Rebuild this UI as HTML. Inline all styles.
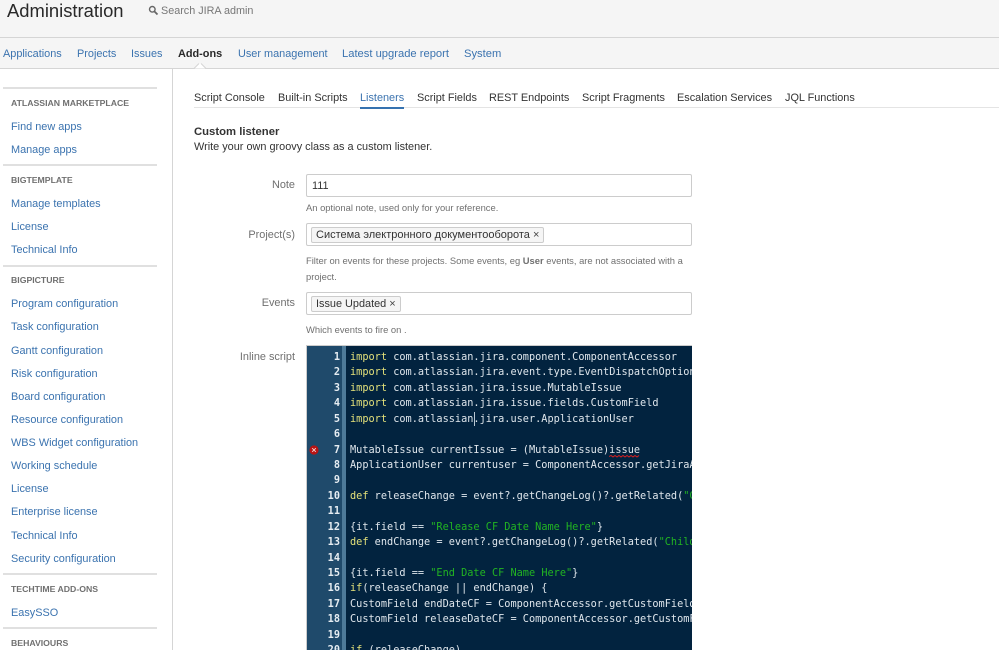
<!DOCTYPE html>
<html><head><meta charset="utf-8">
<style>
html,body{margin:0;padding:0;background:#fff}
body{width:999px;height:650px;position:relative;overflow:hidden;font-family:"Liberation Sans","Noto Sans CJK SC",sans-serif;font-size:11px;color:#333}
.t{position:absolute;white-space:nowrap;line-height:14px}
.h{position:absolute;background:#e0e0e0;height:2px;left:3px;width:154px}
.s{position:absolute;white-space:nowrap;left:11px;font-size:8.7px;line-height:12px;font-weight:bold;color:#707070}
.a{position:absolute;white-space:nowrap;left:11px;line-height:14px;color:#3b73af;font-size:10.9px}
.tab{position:absolute;top:91px;white-space:nowrap;line-height:14px;font-size:10.9px;color:#333}
.nav{position:absolute;top:47px;white-space:nowrap;line-height:14px;font-size:10.9px;color:#3b73af}
.lab{position:absolute;right:704px;white-space:nowrap;line-height:14px;font-size:10.9px;color:#707070}
.inp{position:absolute;left:306px;width:384px;height:21px;border:1px solid #ccc;border-radius:2px;background:#fff}
.help{position:absolute;left:306px;white-space:nowrap;font-size:9.4px;line-height:14px;color:#707070}
.tag{position:absolute;top:3px;left:4px;height:14px;line-height:14px;border:1px solid #ccc;border-radius:2px;background:#f5f5f5;padding:0 4px;font-size:10.9px;color:#333;white-space:nowrap}
#code{position:absolute;left:307px;top:346px;width:385px;height:304px;background:#02233f;overflow:hidden;font-family:"DejaVu Sans Mono","Liberation Mono",monospace;font-size:10.25px;color:#dfe6ec}
#gut{position:absolute;left:0;top:0;width:35px;height:304px;background:#1f4a6b;border-right:4px solid #4d7a99;box-sizing:content-box}
.n{position:absolute;left:0;width:33px;text-align:right;line-height:15px;color:#e6edf2;font-weight:bold}
.c{position:absolute;left:43px;line-height:15px;white-space:pre}
.k{color:#e3e07a}
.g{color:#22b422}
</style></head><body>
<div style="position:absolute;left:0;top:0;width:999px;height:37px;background:#f5f5f5"></div>
<div style="position:absolute;left:0;top:37px;width:999px;height:30px;background:#f5f5f5;border-top:1px solid #d5d5d5;border-bottom:1px solid #d5d5d5"></div>
<svg style="position:absolute;left:192px;top:62px" width="16" height="8"><path d="M2 6.5 L8 1 L14 6.5 Z" fill="#fff"/><path d="M1 6.5 L2 6.5 L7 1.5 M9 1.5 L14 6.5 L15 6.5" fill="none" stroke="#d5d5d5"/></svg>
<div class="t" style="left:7px;top:-1px;font-size:18.4px;line-height:24px;color:#292929">Administration</div>
<svg style="position:absolute;left:148px;top:5px" width="11" height="11" viewBox="0 0 11 11"><circle cx="4.3" cy="4.3" r="2.8" fill="none" stroke="#666" stroke-width="1.4"/><path d="M6.5 6.5L9.5 9.5" stroke="#666" stroke-width="1.8"/></svg>
<div class="t" style="left:161px;top:4px;font-size:10.8px;color:#777">Search JIRA admin</div>

<div class="nav" style="left:3px">Applications</div>
<div class="nav" style="left:77px">Projects</div>
<div class="nav" style="left:131px">Issues</div>
<div class="nav" style="left:178px;color:#292929;font-weight:bold">Add-ons</div>
<div class="nav" style="left:238px">User management</div>
<div class="nav" style="left:342px;font-size:11.2px">Latest upgrade report</div>
<div class="nav" style="left:464px;font-size:11.2px">System</div>

<div style="position:absolute;left:172px;top:68px;width:1px;height:582px;background:#d5d5d5"></div>

<div class="h" style="top:87px"></div>
<div class="s" style="top:97px">ATLASSIAN MARKETPLACE</div>
<div class="a" style="top:120px">Find new apps</div>
<div class="a" style="top:143px">Manage apps</div>
<div class="h" style="top:164px"></div>
<div class="s" style="top:174px">BIGTEMPLATE</div>
<div class="a" style="top:197px">Manage templates</div>
<div class="a" style="top:220px">License</div>
<div class="a" style="top:243px">Technical Info</div>
<div class="h" style="top:265px"></div>
<div class="s" style="top:274px">BIGPICTURE</div>
<div class="a" style="top:297px">Program configuration</div>
<div class="a" style="top:320px">Task configuration</div>
<div class="a" style="top:344px">Gantt configuration</div>
<div class="a" style="top:367px">Risk configuration</div>
<div class="a" style="top:390px">Board configuration</div>
<div class="a" style="top:413px">Resource configuration</div>
<div class="a" style="top:436px">WBS Widget configuration</div>
<div class="a" style="top:459px">Working schedule</div>
<div class="a" style="top:482px">License</div>
<div class="a" style="top:505px">Enterprise license</div>
<div class="a" style="top:529px">Technical Info</div>
<div class="a" style="top:552px">Security configuration</div>
<div class="h" style="top:573px"></div>
<div class="s" style="top:583px">TECHTIME ADD-ONS</div>
<div class="a" style="top:606px">EasySSO</div>
<div class="h" style="top:627px"></div>
<div class="s" style="top:637px">BEHAVIOURS</div>

<div style="position:absolute;left:194px;top:107px;width:805px;height:1px;background:#e4e4e4"></div>
<div class="tab" style="left:194px">Script Console</div>
<div class="tab" style="left:278px">Built-in Scripts</div>
<div class="tab" style="left:360px;color:#3b73af">Listeners</div>
<div style="position:absolute;left:360px;top:107px;width:44px;height:2px;background:#3572b0"></div>
<div class="tab" style="left:417px">Script Fields</div>
<div class="tab" style="left:489px">REST Endpoints</div>
<div class="tab" style="left:582px">Script Fragments</div>
<div class="tab" style="left:677px">Escalation Services</div>
<div class="tab" style="left:785px">JQL Functions</div>

<div class="t" style="left:194px;top:125px;font-size:11.3px;font-weight:bold;color:#333">Custom listener</div>
<div class="t" style="left:194px;top:140px;font-size:10.9px;color:#333">Write your own groovy class as a custom listener.</div>

<div class="lab" style="top:178px">Note</div>
<div class="inp" style="top:174px"><span style="position:absolute;left:5px;top:4px;line-height:14px;font-size:10.9px;color:#333">111</span></div>
<div class="help" style="top:201px">An optional note, used only for your reference.</div>

<div class="lab" style="top:228px">Project(s)</div>
<div class="inp" style="top:223px"><span class="tag" style="font-size:11px">Система электронного документооборота <span style="font-size:11px;color:#444">×</span></span></div>
<div class="help" style="top:254px">Filter on events for these projects. Some events, eg <b>User</b> events, are not associated with a</div>
<div class="help" style="top:270px">project.</div>

<div class="lab" style="top:296px">Events</div>
<div class="inp" style="top:292px"><span class="tag">Issue Updated <span style="font-size:11px;color:#444">×</span></span></div>
<div class="help" style="top:323px">Which events to fire on .</div>

<div class="lab" style="top:350px">Inline script</div>

<div style="position:absolute;left:306px;top:345px;width:386px;height:305px;background:#ccc"></div>
<div id="code">
<div id="gut"></div>
<div class="n" style="top:4px">1</div><div class="c" style="top:4px"><span class="k">import</span> com.atlassian.jira.component.ComponentAccessor</div>
<div class="n" style="top:19px">2</div><div class="c" style="top:19px"><span class="k">import</span> com.atlassian.jira.event.type.EventDispatchOption</div>
<div class="n" style="top:35px">3</div><div class="c" style="top:35px"><span class="k">import</span> com.atlassian.jira.issue.MutableIssue</div>
<div class="n" style="top:50px">4</div><div class="c" style="top:50px"><span class="k">import</span> com.atlassian.jira.issue.fields.CustomField</div>
<div class="n" style="top:66px">5</div><div class="c" style="top:66px"><span class="k">import</span> com.atlassian.jira.user.ApplicationUser</div>
<div style="position:absolute;left:167px;top:66px;width:1px;height:14px;background:#b8c6d2"></div>
<div class="n" style="top:81px">6</div>
<div class="n" style="top:97px">7</div><div class="c" style="top:97px">MutableIssue currentIssue = (MutableIssue)issue</div>
<svg style="position:absolute;left:302px;top:109px" width="32" height="3"><path d="M0 1.5 L2 0.5 L4 2 L6 0.5 L8 2 L10 0.5 L12 2 L14 0.5 L16 2 L18 0.5 L20 2 L22 0.5 L24 2 L26 0.5 L28 2 L30 0.5" fill="none" stroke="#e02020" stroke-width="0.9"/></svg>
<svg style="position:absolute;left:2px;top:99px" width="10" height="10" viewBox="0 0 10 10"><circle cx="5" cy="5" r="4.6" fill="#b81414"/><path d="M3.2 3.2L6.8 6.8M6.8 3.2L3.2 6.8" stroke="#f4d0d0" stroke-width="1"/></svg>
<div class="n" style="top:112px">8</div><div class="c" style="top:112px">ApplicationUser currentuser = ComponentAccessor.getJiraAuthenticationContext()</div>
<div class="n" style="top:127px">9</div>
<div class="n" style="top:143px">10</div><div class="c" style="top:143px"><span class="k">def</span> releaseChange = event?.getChangeLog()?.getRelated(<span class="g">"ChildChangeItem"</span>)</div>
<div class="n" style="top:158px">11</div>
<div class="n" style="top:174px">12</div><div class="c" style="top:174px">{it.field == <span class="g">"Release CF Date Name Here"</span>}</div>
<div class="n" style="top:189px">13</div><div class="c" style="top:189px"><span class="k">def</span> endChange = event?.getChangeLog()?.getRelated(<span class="g">"ChildChangeItem"</span>)</div>
<div class="n" style="top:205px">14</div>
<div class="n" style="top:220px">15</div><div class="c" style="top:220px">{it.field == <span class="g">"End Date CF Name Here"</span>}</div>
<div class="n" style="top:235px">16</div><div class="c" style="top:235px"><span class="k">if</span>(releaseChange || endChange) {</div>
<div class="n" style="top:251px">17</div><div class="c" style="top:251px">CustomField endDateCF = ComponentAccessor.getCustomFieldManager()</div>
<div class="n" style="top:266px">18</div><div class="c" style="top:266px">CustomField releaseDateCF = ComponentAccessor.getCustomFieldManager()</div>
<div class="n" style="top:282px">19</div>
<div class="n" style="top:297px">20</div><div class="c" style="top:297px"><span class="k">if</span> (releaseChange)</div>
</div>
</body></html>
